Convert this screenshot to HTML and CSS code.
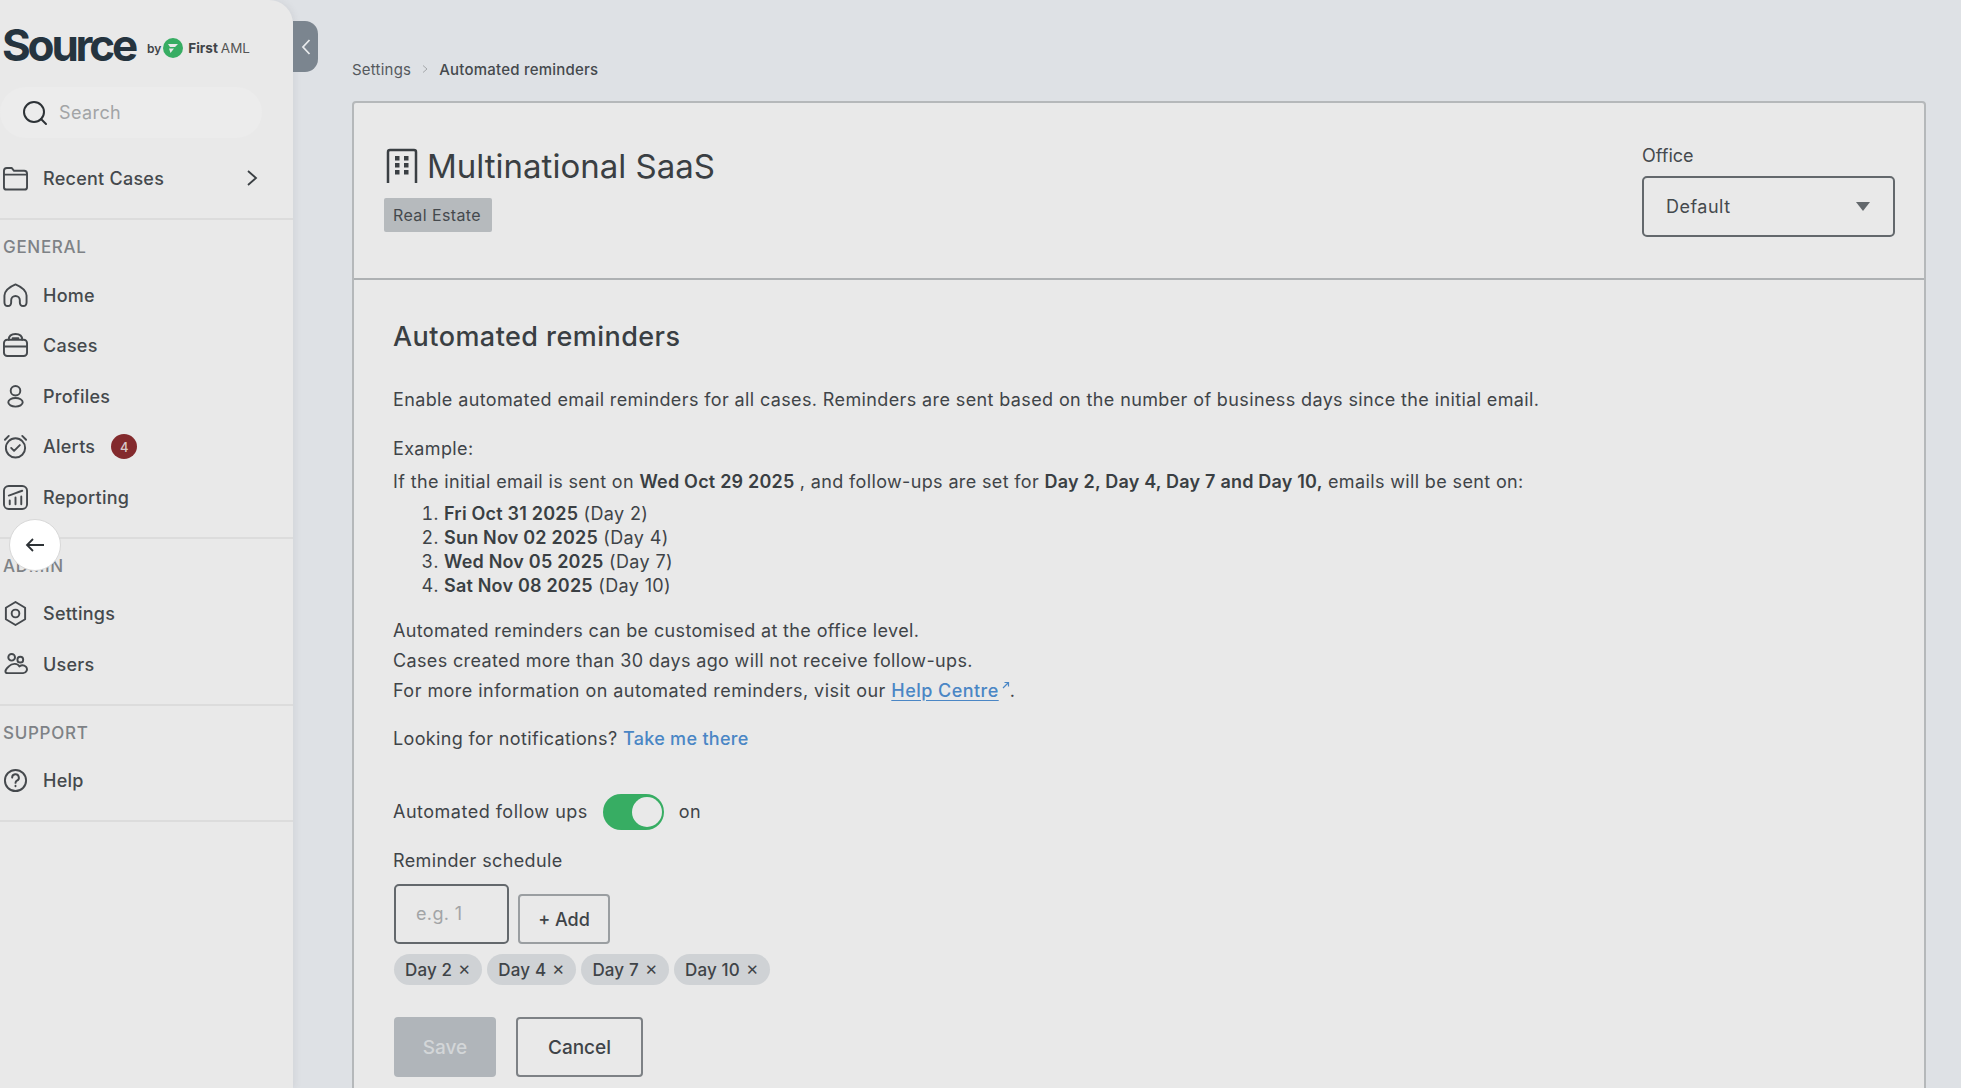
FILE: index.html
```html
<!DOCTYPE html>
<html lang="en">
<head>
<meta charset="utf-8">
<title>Automated reminders</title>
<link rel="stylesheet" href="styles.css">
</head>
<body>
<div class="app">
  <aside class="sidebar">
    <div class="logo">
      <span class="logo-word">Source</span>
      <span class="logo-by">by</span>
      <svg class="logo-mark" viewBox="0 0 20 20"><circle cx="10" cy="10" r="10" fill="#37ad63"/><path d="M5 6h10l-3 3H7zM6 10.500h5L7.500 15z" fill="#e9e9e9"/></svg>
      <span class="logo-first">First</span><span class="logo-aml">AML</span>
    </div>
    <div class="search">
      <svg class="search-icon" viewBox="0 0 26 26" fill="none" stroke="#2d3236" stroke-width="2"><circle cx="12" cy="12" r="10"/><path d="M19 19l5 5" stroke-linecap="round"/></svg>
      <span>Search</span>
    </div>
    <div class="section recent">
      <a class="item">
        <svg class="icon" viewBox="0 0 26 26"><path d="M1 7V5a3 3 0 0 1 3-3h5l2.500 3H22a3 3 0 0 1 3 3v14a2.500 2.500 0 0 1-2.500 2.500h-19A2.500 2.500 0 0 1 1 22zM1 9h24"/></svg>
        <span>Recent Cases</span>
        <svg class="chev" viewBox="0 0 14 18"><path d="M3 2l8 7-8 7"/></svg>
      </a>
    </div>
    <div class="section">
      <h2 class="section-title">GENERAL</h2>
      <a class="item"><svg class="icon" viewBox="0 0 26 26"><path d="M13 1.500C7 4 2 8 1.500 13v7c0 2.500 1.500 4 3.500 4s3.500-1.500 3.500-4v-2a4.500 4.500 0 0 1 9 0v2c0 2.500 1.500 4 3.500 4s3.500-1.500 3.500-4v-7C24 8 19 4 13 1.500z"/></svg><span>Home</span></a>
      <a class="item"><svg class="icon" viewBox="0 0 26 26"><rect x="1" y="7" width="24" height="17" rx="3.500"/><path d="M6 7c0-4 3-6 7-6s7 2 7 6M1 14h24M10 5.500h6"/></svg><span>Cases</span></a>
      <a class="item"><svg class="icon" viewBox="0 0 26 26"><circle cx="13" cy="7" r="5"/><ellipse cx="13" cy="19" rx="7.500" ry="4.500"/></svg><span>Profiles</span></a>
      <a class="item"><svg class="icon" viewBox="0 0 26 26"><circle cx="13" cy="14.500" r="10"/><path d="M8.500 14.500l3 3 6-6M2 6l4-4M24 6l-4-4"/></svg><span>Alerts</span><span class="badge">4</span></a>
      <a class="item"><svg class="icon" viewBox="0 0 26 26"><rect x="1" y="1" width="24" height="24" rx="5"/><path d="M7 20v-4M13 20v-7M19 20v-8M6 11c4-1 8-3 14-5"/></svg><span>Reporting</span></a>
    </div>
    <div class="section">
      <h2 class="section-title">ADMIN</h2>
      <a class="item"><svg class="icon" viewBox="0 0 26 26"><path d="M13 1l10 6v12l-10 6-10-6V7z" stroke-linejoin="round"/><circle cx="13" cy="13" r="4"/></svg><span>Settings</span></a>
      <a class="item"><svg class="icon" viewBox="0 0 26 26"><circle cx="9" cy="5.500" r="3.500"/><circle cx="18" cy="8" r="3"/><path d="M5 22h16a4 4 0 0 0 3-6.500c-2-2-5-2-7-.5-1.500-3-7-4-11 0-5 4-4 7-1 7z"/></svg><span>Users</span></a>
    </div>
    <div class="section">
      <h2 class="section-title">SUPPORT</h2>
      <a class="item"><svg class="icon" viewBox="0 0 26 26"><circle cx="13" cy="13" r="11"/><path d="M9.500 10a3.500 3.500 0 1 1 5 3.200c-1 .6-1.500 1.200-1.500 2.300M13 18.500v.5"/></svg><span>Help</span></a>
    </div>
  </aside>
  <button class="collapse-tab" aria-label="Collapse"><svg viewBox="0 0 12 18"><path d="M9.500 2L3 9l6.500 7"/></svg></button>
  <button class="back-btn" aria-label="Back"><svg viewBox="0 0 20 16"><path d="M19 8H2M8 2L2 8l6 6"/></svg></button>
  <main class="main">
    <nav class="crumbs">
      <span>Settings</span>
      <svg class="crumb-sep" viewBox="0 0 8 10"><path d="M2 1.500L6 5 2 8.500"/></svg>
      <span class="crumb-current">Automated reminders</span>
    </nav>
    <section class="card">
      <header class="card-head">
        <div class="org">
          <h1 class="org-name">
            <svg class="org-icon" viewBox="0 0 32 36"><path d="M2 35V4a2 2 0 0 1 2-2h24a2 2 0 0 1 2 2v31"/><path class="dots" d="M9 8h4.500v4.500H9zM18 8h4.500v4.500H18zM9 15h4.500v4.500H9zM18 15h4.500v4.500H18zM9 22h4.500v4.500H9zM18 22h4.500v4.500H18z"/></svg>
            Multinational SaaS
          </h1>
          <span class="tag">Real Estate</span>
        </div>
        <div class="office">
          <label class="office-label">Office</label>
          <div class="select"><span>Default</span><i class="caret"></i></div>
        </div>
      </header>
      <div class="card-body">
        <h2 class="heading">Automated reminders</h2>
        <p class="intro">Enable automated email reminders for all cases. Reminders are sent based on the number of business days since the initial email.</p>
        <p class="example-label">Example:</p>
        <p class="example">If the initial email is sent on <b>Wed Oct 29 2025</b> , and follow-ups are set for <b>Day 2, Day 4, Day 7 and Day 10,</b> emails will be sent on:</p>
        <ol class="dates">
          <li><b>Fri Oct 31 2025</b> (Day 2)</li>
          <li><b>Sun Nov 02 2025</b> (Day 4)</li>
          <li><b>Wed Nov 05 2025</b> (Day 7)</li>
          <li><b>Sat Nov 08 2025</b> (Day 10)</li>
        </ol>
        <p class="note">Automated reminders can be customised at the office level.</p>
        <p class="note">Cases created more than 30 days ago will not receive follow-ups.</p>
        <p class="note note-long">For more information on automated reminders, visit our <a class="link">Help Centre</a><svg class="ext" viewBox="0 0 8 8"><path d="M1 7l5-5M2.500 1.500H6.500V5.500"/></svg>.</p>
        <p class="notify">Looking for notifications? <a class="take">Take me there</a></p>
        <div class="toggle-row">
          <span class="toggle-label">Automated follow ups</span>
          <span class="toggle"><i class="knob"></i></span>
          <span>on</span>
        </div>
        <div class="schedule-label">Reminder schedule</div>
        <div class="add-row">
          <div class="input">e.g. 1</div>
          <button class="add">+ Add</button>
        </div>
        <div class="chips">
          <span class="chip">Day 2 <i>✕</i></span>
          <span class="chip">Day 4 <i>✕</i></span>
          <span class="chip">Day 7 <i>✕</i></span>
          <span class="chip">Day 10 <i>✕</i></span>
        </div>
        <div class="actions">
          <button class="save">Save</button>
          <button class="cancel">Cancel</button>
        </div>
      </div>
    </section>
  </main>
</div>
</body>
</html>
```
FILE: styles.css
```css
* { box-sizing: border-box; }
html, body { margin: 0; height: 100%; }
body {
  overflow: hidden;
  background: #dee1e5;
  color: #3f4448;
  font-family: Inter, "Liberation Sans", sans-serif;
  font-size: 18px;
}
p, h1, h2, ol { margin: 0; padding: 0; font-weight: 400; }
button { font-family: inherit; cursor: pointer; }
.app { display: flex; height: 1088px; position: relative; }

/* Sidebar */
.sidebar {
  width: 293px;
  flex: none;
  background: #e9e9e9;
  border-top-right-radius: 24px;
  box-shadow: 2px 0 6px rgba(120, 125, 130, .12);
  letter-spacing: .25px;
}
.logo { display: flex; align-items: center; height: 90px; padding: 0 0 0 2px; letter-spacing: 0; }
.logo-word { font-family: Inter, sans-serif; font-weight: 700; font-size: 44px; letter-spacing: -3.200px; color: #25343f; margin-right: 12px; }
.logo-by { font-size: 12px; font-weight: 600; margin-right: 2px; margin-top: 7px; }
.logo-mark { width: 20px; height: 20px; margin-right: 5px; margin-top: 6px; }
.logo-first { font-size: 13.500px; font-weight: 700; margin-top: 6px; margin-right: 3px; }
.logo-aml { font-size: 13.500px; margin-top: 6px; color: #555; }
.search {
  display: flex; align-items: center; gap: 11px;
  width: 262px; height: 51px; margin-top: -3px; padding-left: 22px;
  border-radius: 26px;
  background: #ececec;
  color: #a2a4a6; font-size: 18px; letter-spacing: .4px;
}
.search-icon { width: 26px; height: 26px; }
.section { border-bottom: 2px solid #dcdcdc; padding-bottom: 14px; }
.recent { padding: 15px 0 15px; margin-top: 0; }
.item {
  display: flex; align-items: center; gap: 15px;
  height: 50.500px; padding-left: 3px;
  font-size: 18px; font-weight: 500; color: #45494d;
}
.recent .item { height: 50px; }
.icon { width: 25px; height: 25px; flex: none; fill: none; stroke: #45494d; stroke-width: 2; stroke-linecap: round; stroke-linejoin: round; }
.chev { width: 14px; height: 18px; margin-left: 66px; fill: none; stroke: #3a3f43; stroke-width: 1.800; }
.badge {
  display: flex; align-items: center; justify-content: center;
  width: 26px; height: 25px; margin-left: 1px;
  border-radius: 50%;
  background: #832a2d; color: #d8c9c9; font-size: 13px;
}
.section-title { height: 36px; margin: 14px 0 0 3px; font-size: 17px; font-weight: 500; letter-spacing: .7px; color: #7e8286; line-height: 27px; }
.collapse-tab {
  position: absolute; left: 293px; top: 21px;
  width: 25px; height: 51px; padding: 0;
  border: 0; border-radius: 0 13px 13px 0;
  background: #7b858f;
  display: flex; align-items: center; justify-content: center;
}
.collapse-tab svg { width: 12px; height: 18px; fill: none; stroke: #e8eaec; stroke-width: 1.800; }
.back-btn {
  position: absolute; left: 9px; top: 519px;
  width: 52px; height: 52px; padding: 0;
  border: 1px solid #d8d8d8; border-radius: 50%;
  background: #fff;
  display: flex; align-items: center; justify-content: center;
}
.back-btn svg { width: 20px; height: 16px; fill: none; stroke: #2d3236; stroke-width: 1.800; }

/* Main */
.main { flex: 1; padding: 0 35px 0 59px; }
.crumbs { display: flex; align-items: center; gap: 10px; height: 101px; padding-top: 37px; font-size: 15px; letter-spacing: .22px; color: #55595d; }
.crumb-sep { width: 8px; height: 10px; fill: none; stroke: #a5a8ab; stroke-width: 1; }
.crumb-current { color: #45494d; font-weight: 500; }
.card { border: 2px solid #b5b8ba; border-radius: 4px; background: #e9e9e9; height: 1100px; }
.card-head { display: flex; justify-content: space-between; height: 177px; padding: 40px 29px 0 30px; border-bottom: 2px solid #aeb1b3; }
.org-name { display: flex; align-items: center; gap: 9px; font-size: 33px; color: #3a3f43; height: 46px; line-height: 46px; padding-left: 2px; }
.org-icon { width: 32px; height: 36px; fill: none; stroke: #3a3f43; stroke-width: 2.500; flex: none; }
.org-icon .dots { fill: #3a3f43; stroke: none; }
.tag { display: inline-flex; align-items: center; height: 34px; margin-top: 9px; padding: 0 11px 0 9px; border-radius: 2px; background: #b6babd; font-size: 16px; letter-spacing: .4px; color: #45494d; }
.office { width: 253px; margin-top: 0; }
.office-label { display: block; font-size: 18px; line-height: 26px; margin-bottom: 7px; color: #45494d; }
.select { display: flex; align-items: center; justify-content: space-between; height: 61px; padding: 0 23px 0 22px; border: 2px solid #63686c; border-radius: 5px; color: #45494d; letter-spacing: .5px; }
.caret { width: 0; height: 0; border-left: 7px solid transparent; border-right: 7px solid transparent; border-top: 9px solid #63686c; }
.card-body { padding: 39px 0 0 39px; line-height: 24px; letter-spacing: .36px; }
.heading { font-size: 27px; line-height: 36px; font-weight: 500; color: #3a3f43; margin-bottom: 33px; letter-spacing: .45px; }
.intro { margin-bottom: 25px; letter-spacing: .38px; }
.example-label { margin-bottom: 9px; }
.example { margin-bottom: 8px; }
b { font-weight: 600; color: #3a3f43; letter-spacing: .2px; }
.dates { padding-left: 51px; margin-bottom: 21px; }
.note { margin-bottom: 6px; }
.note-long { letter-spacing: .46px; }
.link { color: #4a86c5; font-weight: 500; text-decoration: underline; text-underline-offset: 3px; }
.ext { width: 8px; height: 8px; margin: 0 0 8px 3px; fill: none; stroke: #4a86c5; stroke-width: 1.200; }
.notify { margin-top: 24px; }
.take { color: #4a86c5; font-weight: 500; letter-spacing: .3px; }
.toggle-row { display: flex; align-items: center; gap: 15px; height: 36px; margin-top: 43px; }
.toggle-label { letter-spacing: .5px; }
.toggle { display: block; width: 61px; height: 36px; border-radius: 18px; background: #37ad63; padding: 3px; position: relative; }
.knob { position: absolute; right: 2px; top: 3px; width: 30px; height: 30px; border-radius: 50%; background: #e9e9e9; }
.schedule-label { margin-top: 18px; line-height: 26px; }
.add-row { display: flex; align-items: flex-end; gap: 9px; margin-top: 10px; }
.input { width: 115px; height: 60px; padding: 16px 0 0 20px; margin-left: 1px; border: 2px solid #63686c; border-radius: 5px; color: #a2a4a6; }
.add { width: 92px; height: 50px; border: 2px solid #9a9ea1; border-radius: 4px; background: transparent; color: #3f4448; font-size: 18px; font-weight: 500; }
.chips { display: flex; gap: 5px; margin: 10px 0 0 1px; letter-spacing: .15px; }
.chip { display: flex; align-items: center; gap: 6px; height: 31px; padding: 0 11px; border-radius: 16px; background: #cfd2d5; font-size: 17px; font-weight: 500; color: #3f4448; }
.chip i { font-style: normal; font-size: 15px; }
.actions { display: flex; gap: 20px; margin: 32px 0 0 1px; }
.save, .cancel { height: 60px; border-radius: 4px; font-size: 19px; font-weight: 500; }
.save { width: 102px; border: 0; background: #b0b5ba; color: #d3d6d8; }
.cancel { width: 127px; border: 2px solid #7d8185; background: transparent; color: #3f4448; }
```
